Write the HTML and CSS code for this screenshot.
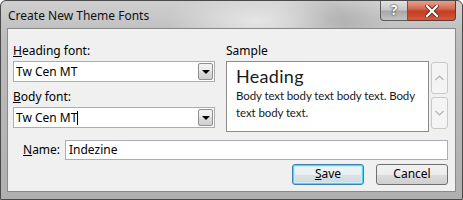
FILE: index.html
```html
<!DOCTYPE html>
<html lang="en">
<head>
    <meta charset="UTF-8">
    <title>Create New Theme Fonts</title>
    <link rel="stylesheet" href="styles.css">
</head>
<body>
    <div class="window">
        <div class="titlebar">
            <span class="title">Create New Theme Fonts</span>
            <div class="caption-btns">
                <div class="btn-help">?</div>
                <div class="btn-close">
                    <svg width="14" height="12" viewBox="0 0 14 12">
                        <path d="M2 1 L12 11 M12 1 L2 11" stroke="#5a2a22" stroke-width="4" stroke-linecap="square"/>
                        <path d="M2 1 L12 11 M12 1 L2 11" stroke="#ffffff" stroke-width="2.2" stroke-linecap="square"/>
                    </svg>
                </div>
            </div>
        </div>

        <div class="client">
            <div class="top">
                <div class="fonts">
                    <div class="label"><u>H</u>eading font:</div>
                    <div class="combo">
                        <span>Tw Cen MT</span>
                        <div class="drop"><span class="arrow"></span></div>
                    </div>
                    <div class="label"><u>B</u>ody font:</div>
                    <div class="combo">
                        <span>Tw Cen MT<span class="caret"></span></span>
                        <div class="drop"><span class="arrow"></span></div>
                    </div>
                </div>
                <div class="sample-col">
                    <div class="label">Sample</div>
                    <div class="sample-row">
                        <div class="sample">
                            <div class="sample-heading">Heading</div>
                            <div class="sample-body">Body text body text body text. Body text body text.</div>
                        </div>
                        <div class="spin">
                            <div class="spin-btn">
                                <svg width="9" height="6" viewBox="0 0 9 6"><path d="M0.5 5 L4.5 1 L8.5 5" fill="none" stroke="#b4b4b4" stroke-width="1.2"/></svg>
                            </div>
                            <div class="spin-btn">
                                <svg width="9" height="6" viewBox="0 0 9 6"><path d="M0.5 1 L4.5 5 L8.5 1" fill="none" stroke="#b4b4b4" stroke-width="1.2"/></svg>
                            </div>
                        </div>
                    </div>
                </div>
            </div>

            <div class="name-row">
                <div class="label name-label"><u>N</u>ame:</div>
                <div class="textbox">Indezine</div>
            </div>

            <div class="buttons">
                <div class="button default"><u>S</u>ave</div>
                <div class="button">Cancel</div>
            </div>
        </div>
    </div>
</body>
</html>
```

FILE: styles.css
```css
body {
    margin: 0;
    background-color: #ffffff;
    font-family: "Noto Sans", "Open Sans", sans-serif;
    font-size: 12px;
    color: #000000;
}

.window {
    width: 463px;
    height: 200px;
    box-sizing: border-box;
    border: 1px solid #4a4a4a;
    border-radius: 6px 6px 0 0;
    background:
        radial-gradient(ellipse 90px 30px at 255px 20px, rgba(235, 235, 235, 0.85), rgba(235, 235, 235, 0) 100%),
        radial-gradient(ellipse 60px 25px at 330px 18px, rgba(150, 150, 150, 0.5), rgba(150, 150, 150, 0) 100%),
        linear-gradient(to bottom, #cfcfcf 0%, #bcbcbc 20%, #b0b0b0 100%);
    display: flex;
    flex-direction: column;
    overflow: hidden;
}

.titlebar {
    height: 27px;
    display: flex;
    justify-content: space-between;
    align-items: flex-start;
}

.title {
    margin-top: 6px;
    margin-left: 7px;
    color: #111111;
}

.caption-btns {
    display: flex;
    margin-right: 6px;
}

.btn-help {
    width: 26px;
    height: 19px;
    border: 1px solid #5c5c5c;
    border-top: none;
    border-radius: 0 0 0 4px;
    background: linear-gradient(to bottom, #e2e2e2 0%, #c8c8c8 45%, #a9a9a9 55%, #c2c2c2 100%);
    color: #ffffff;
    font-weight: bold;
    font-size: 14px;
    line-height: 18px;
    text-align: center;
    text-shadow: 0 0 2px #333333, 0 0 1px #333333;
}

.btn-close {
    width: 47px;
    height: 19px;
    border: 1px solid #5c3a32;
    border-top: none;
    border-left: none;
    border-radius: 0 0 4px 0;
    background: linear-gradient(to bottom, #e7a08e 0%, #d46a52 40%, #c23d22 55%, #d9573c 100%);
    display: flex;
    align-items: center;
    justify-content: center;
}

.client {
    margin: 0 6px;
    height: 164px;
    box-sizing: border-box;
    border: 1px solid #8a8a8a;
    background-color: #f0f0f0;
    padding: 14px 7px 0 5px;
}

.label u {
    text-decoration: underline;
}

.top {
    display: flex;
    gap: 11px;
}

.fonts {
    width: 202px;
    display: flex;
    flex-direction: column;
}

.label {
    height: 18px;
    line-height: 16px;
}

.combo {
    height: 21px;
    box-sizing: border-box;
    border: 1px solid #abadb3;
    background-color: #ffffff;
    display: flex;
    align-items: center;
    justify-content: space-between;
    padding-left: 2px;
    margin-bottom: 7px;
}

.caret {
    display: inline-block;
    width: 1px;
    height: 14px;
    background-color: #000000;
    vertical-align: -3px;
}

.drop {
    width: 15px;
    height: 17px;
    box-sizing: border-box;
    margin-right: 1px;
    border: 1px solid #8e8f8f;
    border-radius: 2px;
    background: linear-gradient(to bottom, #f2f2f2 0%, #ebebeb 50%, #dddddd 50%, #cfcfcf 100%);
    display: flex;
    align-items: center;
    justify-content: center;
}

.arrow {
    width: 0;
    height: 0;
    border-left: 4px solid transparent;
    border-right: 4px solid transparent;
    border-top: 4px solid #000000;
}

.sample-col {
    flex: 1;
    display: flex;
    flex-direction: column;
}

.sample-row {
    display: flex;
    gap: 2px;
}

.sample {
    width: 203px;
    height: 71px;
    box-sizing: border-box;
    border: 1px solid #8c8c8c;
    background-color: #ffffff;
    padding: 3px 2px 0 9px;
    font-family: "Lato", sans-serif;
    color: #1a1a1a;
}

.sample-heading {
    font-size: 18px;
    line-height: 22px;
    letter-spacing: 0.3px;
}

.sample-body {
    font-size: 11.5px;
    line-height: 17px;
    letter-spacing: -0.1px;
}

.spin {
    display: flex;
    flex-direction: column;
    gap: 3px;
    padding-top: 1px;
}

.spin-btn {
    width: 17px;
    height: 32px;
    box-sizing: border-box;
    border: 1px solid #c8c8c8;
    border-radius: 3px;
    background-color: #f4f4f4;
    display: flex;
    align-items: center;
    justify-content: center;
}

.name-row {
    display: flex;
    align-items: center;
    margin-top: 5px;
}

.name-label {
    width: 52px;
    box-sizing: border-box;
    padding-left: 10px;
    line-height: 20px;
    height: 20px;
}

.textbox {
    flex: 1;
    height: 20px;
    box-sizing: border-box;
    border: 1px solid #abadb3;
    background-color: #ffffff;
    padding-left: 3px;
    line-height: 17px;
}

.buttons {
    display: flex;
    justify-content: flex-end;
    gap: 12px;
    margin-top: 4px;
}

.button {
    width: 72px;
    height: 21px;
    box-sizing: border-box;
    border: 1px solid #707070;
    border-radius: 3px;
    background: linear-gradient(to bottom, #f2f2f2 0%, #ebebeb 50%, #dddddd 50%, #cfcfcf 100%);
    text-align: center;
    line-height: 18px;
}

.button.default {
    border-color: #3c7fb1;
    box-shadow: inset 0 0 0 1px #48d8fb, inset 0 0 0 2px #c4eefc;
    background: linear-gradient(to bottom, #f0f4f6 0%, #e8eef1 50%, #dbe3e7 50%, #cfd8dc 100%);
}
```
